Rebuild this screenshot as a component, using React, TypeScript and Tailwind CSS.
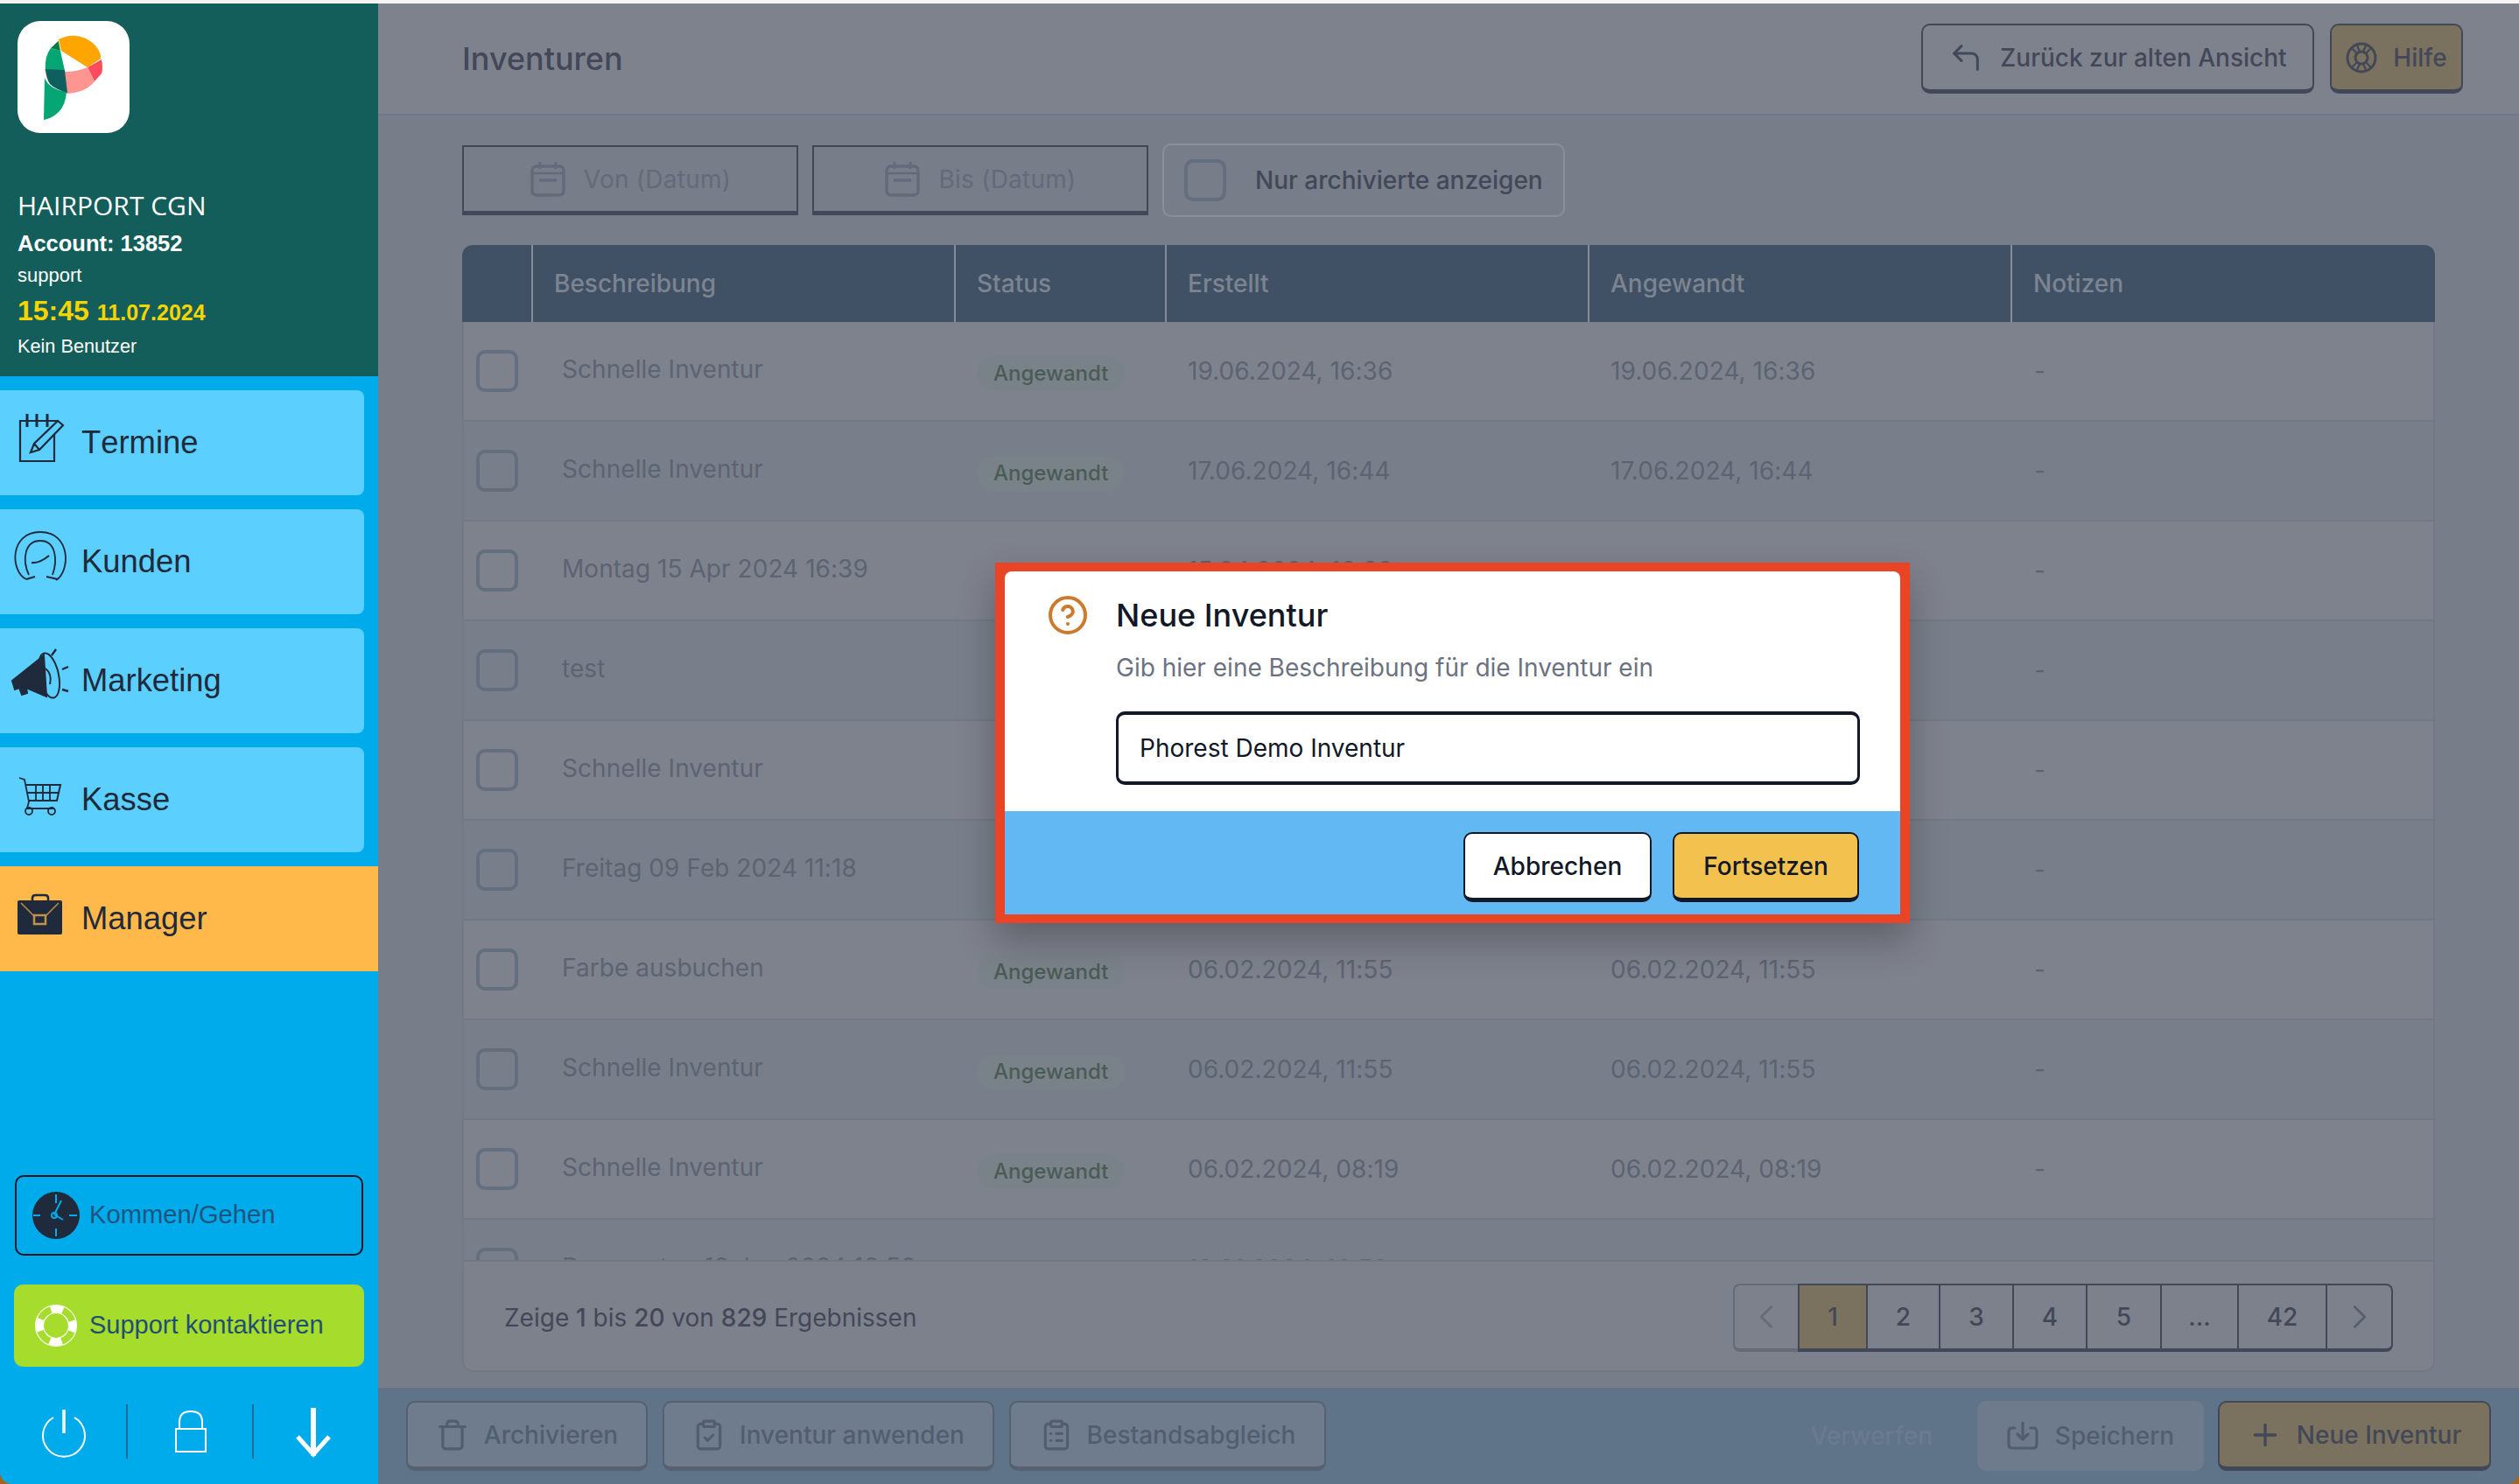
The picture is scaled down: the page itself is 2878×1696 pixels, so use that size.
import React from "react";
import { CircleHelp, CornerUpLeft, Plus, ChevronLeft, ChevronRight, Trash, ClipboardCheck, ClipboardList } from "lucide-react";

const INK = "#1f2a3c";

function Logo() {
  return (
    <div className="w-[128px] h-[128px] rounded-[26px] bg-white">
      <svg width="128" height="128" viewBox="0 0 128 128">
        <path d="M47 21 Q63 13 78 20 Q92 27 95 39 L95 43 L80 53 L50 34 Z" fill="#ffa500" />
        <path d="M80 53 L96 44 Q98 54 96 60 L88 69 Z" fill="#ff4b5c" />
        <path d="M54 58 Q68 58 80 53 L88 69 Q78 82 56 83 Z" fill="#ff9590" />
        <path d="M31.7 56 Q31 40 38 31 L49 34 L54 57 Z" fill="#06a574" />
        <path d="M38 31 L46.7 22.7 L49 34 Z" fill="#0a7d3e" />
        <path d="M31 65 Q36 78 56 81 Q55 96 47 104 Q40 111 30 113 Z" fill="#06a574" />
        <path d="M31.7 55 L54 56 L57 82 Q43 78 37 72 Q33 66 31.7 55 Z" fill="#0f5f5e" />
      </svg>
    </div>
  );
}

function TermineIcon() {
  return (
    <svg width="90" height="120" viewBox="0 0 90 120" fill="none" stroke={INK} strokeWidth="2.2">
      <path d="M62 50 V81 H23 V35 H66" />
      <path d="M31 27 V42 M42 27 V42 M54 27 V42" strokeWidth="3" />
      <path d="M35 71 L39 61 L66 35 L72 40 L45 68 Z M39 61 L45 68" />
    </svg>
  );
}
function KundenIcon() {
  return (
    <svg width="90" height="120" viewBox="0 0 90 120" fill="none" stroke={INK} strokeWidth="1.8">
      <path d="M30 80 C12 72 10 26 46 26 C82 26 80 72 64 81" />
      <path d="M33 75 C25 58 28 36 46 36 C64 36 66 58 60 75" />
      <path d="M36 61 C44 62 50 58 56 53" strokeWidth="2.2" />
      <path d="M30 80 L40 77 M53 77 L66 80" strokeWidth="2.2" />
    </svg>
  );
}
function MarketingIcon() {
  return (
    <svg width="90" height="120" viewBox="0 0 90 120" fill="none" stroke={INK} strokeWidth="2">
      <path d="M14 60 L44 36 L50 31 L53 78 L30 68 L31 74 L25 76 L22 68 L17 70 Z" fill={INK} />
      <ellipse cx="56" cy="54" rx="11" ry="26" transform="rotate(-12 56 54)" />
      <path d="M52 46 C57 50 59 56 57 64" />
      <path d="M59 31 L64 24 M71 47 L78 44 M71 70 L78 72" strokeWidth="2.4" />
    </svg>
  );
}
function KasseIcon() {
  return (
    <svg width="90" height="120" viewBox="0 0 90 120" fill="none" stroke={INK} strokeWidth="1.8">
      <path d="M22 35 L28 37 L33 62 L31 70 H62" />
      <path d="M30 43 H69 L65 61 H33" strokeWidth="2" />
      <path d="M31 52 H67 M41 43 V61 M49 43 V61 M57 43 V61" />
      <circle cx="33" cy="73" r="4" />
      <circle cx="59" cy="73" r="4" />
    </svg>
  );
}
function ManagerIcon() {
  return (
    <svg width="90" height="120" viewBox="0 0 90 120" fill="none">
      <path d="M37 39 V36 Q37 33 41 33 H51 Q55 33 55 36 V39" stroke={INK} strokeWidth="2.5" />
      <rect x="20" y="39" width="51" height="39" rx="2" fill={INK} />
      <path d="M24 42 L40 58 M67 42 L51 58" stroke="#b98a3f" strokeWidth="1.6" />
      <rect x="39" y="56" width="13" height="10" fill={INK} stroke="#c2914a" strokeWidth="2.5" />
    </svg>
  );
}
function ClockIcon() {
  return (
    <svg width="56" height="56" viewBox="0 0 56 56" fill="none" stroke="#00abeb" strokeWidth="2">
      <circle cx="28" cy="28" r="27" fill={INK} stroke="none" />
      <path d="M28 4 V14 M28 43 V52 M2 28 H10 M43 28 H52" />
      <path d="M26 27 L34 11 M26 27 L36 33" />
      <circle cx="26" cy="28" r="3" />
    </svg>
  );
}
function BuoyIcon() {
  return (
    <svg width="50" height="50" viewBox="0 0 50 50" fill="none" stroke="#ffffff">
      <circle cx="25" cy="25" r="19" strokeWidth="8" strokeDasharray="14 16" strokeDashoffset="7" />
      <circle cx="25" cy="25" r="23.5" strokeWidth="1.2" />
      <circle cx="25" cy="25" r="14.5" strokeWidth="1.2" />
    </svg>
  );
}
function WheelIcon() {
  return (
    <svg width="36" height="36" viewBox="0 0 36 36" fill="none" stroke="#434859" strokeWidth="3">
      <circle cx="18" cy="18" r="16" />
      <circle cx="18" cy="18" r="7" />
      <path d="M7 7 L13 13 M13 4 L16 11 M29 7 L23 13 M23 4 L20 11 M7 29 L13 23 M13 32 L16 25 M29 29 L23 23 M23 32 L20 25" strokeWidth="2.2" />
    </svg>
  );
}
function CalendarIcon() {
  return (
    <svg width="42" height="42" viewBox="0 0 42 42" fill="none" stroke="#636b7b" strokeWidth="3.5">
      <rect x="3" y="6" width="36" height="33" rx="5" />
      <path d="M12 1 V9 M30 1 V9 M3 14 H39" strokeWidth="2.5" />
      <path d="M11 22 H31" />
    </svg>
  );
}
function SaveIcon() {
  return (
    <svg width="36" height="34" viewBox="0 0 36 34" fill="none" stroke="#525e70" strokeWidth="3.2" strokeLinecap="round" strokeLinejoin="round">
      <path d="M9 8 H6 Q2 8 2 12 V27 Q2 31 6 31 H30 Q34 31 34 27 V12 Q34 8 30 8 H27" />
      <path d="M18 2 V21 M12 15 L18 21 L24 15" />
    </svg>
  );
}

const NAV = [
  { label: "Termine", icon: <TermineIcon /> },
  { label: "Kunden", icon: <KundenIcon /> },
  { label: "Marketing", icon: <MarketingIcon /> },
  { label: "Kasse", icon: <KasseIcon /> },
];

function Sidebar() {
  return (
    <aside className="w-[432px] shrink-0 h-full flex flex-col bg-[#00abeb] font-['Liberation_Sans',Arial,sans-serif]">
      <div className="h-[426px] shrink-0 bg-[#135e5a] pt-5 pl-5 text-white">
        <Logo />
        <div className="mt-[63px] h-[40px] leading-[40px] text-[30px] font-['Open_Sans',sans-serif]">HAIRPORT CGN</div>
        <div className="mt-[3px] h-[40px] leading-[40px] text-[25.5px] font-bold">Account: 13852</div>
        <div className="mt-[2px] h-[30px] leading-[30px] text-[22px]">support</div>
        <div className="mt-[5px] h-[40px] leading-[40px] text-[#f5d400] font-bold flex items-baseline gap-[9px]">
          <span className="text-[32px]">15:45</span>
          <span className="text-[25px]">11.07.2024</span>
        </div>
        <div className="mt-[6px] h-[30px] leading-[30px] text-[21.7px]">Kein Benutzer</div>
      </div>
      <nav className="pt-4 flex flex-col gap-4">
        {NAV.map((n) => (
          <div key={n.label} className="w-[416px] h-[120px] rounded-r-lg bg-[#5bcffd] flex items-center gap-[3px] text-[36.4px] text-[#1f2a3c] [font-kerning:none]">
            {n.icon}
            <span>{n.label}</span>
          </div>
        ))}
        <div className="w-[432px] h-[120px] bg-[#ffb84a] flex items-center gap-[3px] text-[36.4px] text-[#1f2a3c] [font-kerning:none]">
          <ManagerIcon />
          <span>Manager</span>
        </div>
      </nav>
      <div className="mt-[233px] ml-[17px] w-[398px] h-[92px] rounded-[10px] border-2 border-[#0b1220] flex items-center pl-[17px] gap-[10px] text-[29.2px] text-[#1e5480]">
        <ClockIcon />
        <span>Kommen/Gehen</span>
      </div>
      <div className="mt-[33px] ml-4 w-[400px] h-[94px] rounded-[10px] bg-[#a6dc2b] flex items-center pl-[23px] gap-[13px] text-[29px] text-[#1f4f75]">
        <BuoyIcon />
        <span>Support kontaktieren</span>
      </div>
      <div className="pt-[43px] flex h-[134px]">
        <div className="w-[144px] h-[62px] flex items-center justify-center">
          <svg className="mt-[3px] ml-[1px]" width="56" height="62" viewBox="0 0 56 62" fill="none" stroke="#ffffff" strokeWidth="2">
            <path d="M16 13 A24 24 0 1 0 40 13" />
            <path d="M28 4 V31" strokeWidth="3.5" />
          </svg>
        </div>
        <div className="w-[2px] h-[62px] bg-[#1e6d9b]" />
        <div className="w-[142px] h-[62px] flex items-center justify-center">
          <svg className="mt-[4px] ml-[1px]" width="40" height="54" viewBox="0 0 40 54" fill="none" stroke="#ffffff" strokeWidth="2">
            <rect x="3" y="22" width="34" height="26" />
            <path d="M7 22 V14 Q7 2 20 2 Q33 2 33 14 V22" />
          </svg>
        </div>
        <div className="w-[2px] h-[62px] bg-[#1e6d9b]" />
        <div className="w-[136px] h-[62px] flex items-center justify-center">
          <svg className="mt-[1px]" width="42" height="62" viewBox="0 0 42 62" fill="none" stroke="#ffffff">
            <path d="M21 3 V58" strokeWidth="6" />
            <path d="M3 36 L21 56 L39 36" strokeWidth="5" />
          </svg>
        </div>
      </div>
    </aside>
  );
}

type Row = { name: string; created: string; applied: string; done: boolean };

const ROWS: Row[] = [
  { name: "Schnelle Inventur", created: "19.06.2024, 16:36", applied: "19.06.2024, 16:36", done: true },
  { name: "Schnelle Inventur", created: "17.06.2024, 16:44", applied: "17.06.2024, 16:44", done: true },
  { name: "Montag 15 Apr 2024 16:39", created: "15.04.2024, 16:39", applied: "-", done: false },
  { name: "test", created: "15.04.2024, 10:12", applied: "-", done: false },
  { name: "Schnelle Inventur", created: "12.03.2024, 09:41", applied: "-", done: false },
  { name: "Freitag 09 Feb 2024 11:18", created: "09.02.2024, 11:18", applied: "-", done: false },
  { name: "Farbe ausbuchen", created: "06.02.2024, 11:55", applied: "06.02.2024, 11:55", done: true },
  { name: "Schnelle Inventur", created: "06.02.2024, 11:55", applied: "06.02.2024, 11:55", done: true },
  { name: "Schnelle Inventur", created: "06.02.2024, 08:19", applied: "06.02.2024, 08:19", done: true },
  { name: "Donnerstag 18 Jan 2024 16:50", created: "18.01.2024, 16:50", applied: "-", done: false },
];

const HEAD = ["", "Beschreibung", "Status", "Erstellt", "Angewandt", "Notizen"];

function Checkbox() {
  return <div className="w-[48px] h-[48px] rounded-[10px] border-[4px] border-[#656e7e]" />;
}

function Table() {
  return (
    <div className="mt-8 flex-1 min-h-0 flex flex-col rounded-t-xl rounded-b-xl overflow-hidden">
      <div className="h-[88px] shrink-0 grid grid-cols-[81px_483px_241px_483px_483px_1fr] bg-[#415165] text-[28px] font-medium text-[#7d8491]">
        {HEAD.map((h, i) => (
          <div key={i} className={"flex items-center pl-[24px] " + (i < 5 ? "border-r-2 border-[#858b97]" : "")}>
            {h}
          </div>
        ))}
      </div>
      <div className="flex-1 min-h-0 overflow-hidden border-x-2 border-[#747884]">
        {ROWS.map((r, i) => (
          <div
            key={i}
            className={
              "h-[114px] grid grid-cols-[79px_483px_241px_483px_483px_1fr] items-center border-b-2 border-[#747884] text-[28px] tracking-[0.05px] text-[#5c6372] " +
              (i % 2 === 0 ? "bg-[#7e828d]" : "bg-[#797f8a]")
            }
          >
            <div className="pl-[14px]">
              <Checkbox />
            </div>
            <div className="pl-[33px] pb-[5px]">{r.name}</div>
            <div className="pl-[24px]">
              {r.done && (
                <span className="inline-flex items-center h-[40px] px-[19px] mt-[6px] rounded-full bg-[#7a8289] text-[24px] tracking-normal font-medium text-[#4a5b56]">
                  Angewandt
                </span>
              )}
            </div>
            <div className="pl-[24px]">{r.created}</div>
            <div className="pl-[24px]">{r.applied}</div>
            <div className="pl-[25px]">-</div>
          </div>
        ))}
      </div>
      <div className="h-[128px] shrink-0 bg-[#7d818c] border-t-2 border-x-2 border-b-2 border-[#747884] rounded-b-xl flex items-center justify-between pt-[3px] pl-[46px] pr-[46px]">
        <div className="text-[28px] text-[#434859]">
          Zeige <span className="font-medium">1</span> bis <span className="font-medium">20</span> von{" "}
          <span className="font-medium">829</span> Ergebnissen
        </div>
        <Pagination />
      </div>
    </div>
  );
}

function Pagination() {
  const pages = [
    ["2", "w-[83px]"],
    ["3", "w-[84px]"],
    ["4", "w-[84px]"],
    ["5", "w-[85px]"],
    ["...", "w-[88px]"],
    ["42", "w-[101px]"],
  ];
  return (
    <div className="flex h-[78px] text-[28px] font-medium text-[#434859]">
      <div className="w-[74px] flex items-center justify-center rounded-l-lg border-2 border-b-4 border-r-0 border-[#646b79] text-[#646b79]">
        <ChevronLeft size={46} strokeWidth={1.3} />
      </div>
      <div className="w-[80px] flex items-center justify-center bg-[#7a725e] border-2 border-b-4 border-[#434859]">1</div>
      {pages.map(([p, w]) => (
        <div key={p} className={w + " flex items-center justify-center border-t-2 border-b-4 border-r-2 border-[#434859]"}>
          {p}
        </div>
      ))}
      <div className="w-[75px] flex items-center justify-center rounded-r-lg border-t-2 border-b-4 border-r-2 border-[#434859] text-[#565d6c]">
        <ChevronRight size={46} strokeWidth={1.3} />
      </div>
    </div>
  );
}

function Main() {
  const btn = "h-[80px] rounded-[10px] flex items-center justify-center border-2 border-b-[5px] text-[28px] font-medium";
  return (
    <main className="flex-1 min-w-0 h-full flex flex-col bg-[#777d89] font-['Inter',sans-serif]">
      <header className="h-[128px] shrink-0 bg-[#7e828d] border-b-2 border-[#6b788d] flex items-center justify-between pl-[96px] pr-[64px]">
        <h1 className="text-[36px] font-medium text-[#434859]">Inventuren</h1>
        <div className="flex gap-[18px] text-[#434859]">
          <div className={btn + " w-[449px] gap-[19px] border-[#434859]"}>
            <CornerUpLeft size={40} strokeWidth={1.8} />
            <span>Zurück zur alten Ansicht</span>
          </div>
          <div className={btn + " w-[152px] gap-[18px] border-[#434859] bg-[#7a725e]"}>
            <WheelIcon />
            <span>Hilfe</span>
          </div>
        </div>
      </header>
      <div className="flex-1 min-h-0 flex flex-col pt-8 px-[96px] pb-[18px]">
        <div className="h-[84px] shrink-0 flex items-center gap-4 text-[28px] tracking-[0.25px]">
          <div className="w-[384px] h-[80px] flex items-center justify-center gap-[20px] border-2 border-b-[5px] border-[#434859] text-[#636b7b]">
            <CalendarIcon />
            <span>Von (Datum)</span>
          </div>
          <div className="w-[384px] h-[80px] flex items-center justify-center gap-[20px] border-2 border-b-[5px] border-[#434859] text-[#636b7b]">
            <CalendarIcon />
            <span>Bis (Datum)</span>
          </div>
          <div className="w-[460px] h-[84px] rounded-[10px] border-2 border-[#8a8f9a] flex items-center pl-[23px] gap-[33px] font-medium tracking-normal text-[#434859]">
            <Checkbox />
            <span>Nur archivierte anzeigen</span>
          </div>
        </div>
        <Table />
      </div>
      <div className="h-[110px] shrink-0 bg-[#5f7389] flex items-center pl-[32px] pr-[32px] text-[#525e70]">
        <div className="flex gap-[17px]">
          <div className={btn + " w-[276px] gap-[17px] border-[#56606f] bg-[#6f7c8d]"}>
            <Trash size={38} strokeWidth={2} />
            <span>Archivieren</span>
          </div>
          <div className={btn + " w-[379px] gap-[16px] border-[#56606f] bg-[#6f7c8d]"}>
            <ClipboardCheck size={38} strokeWidth={2} />
            <span>Inventur anwenden</span>
          </div>
          <div className={btn + " w-[362px] gap-[16px] border-[#56606f] bg-[#6f7c8d]"}>
            <ClipboardList size={38} strokeWidth={2} />
            <span>Bestandsabgleich</span>
          </div>
        </div>
        <div className="ml-auto mr-[51px] text-[28px] font-medium text-[#6b7a8e]">Verwerfen</div>
        <div className="w-[259px] h-[80px] rounded-[10px] bg-[#6d7b8c] flex items-center justify-center gap-[19px] text-[28px] font-medium">
          <SaveIcon />
          <span>Speichern</span>
        </div>
        <div className={btn + " ml-4 w-[312px] gap-[16px] border-[#434859] bg-[#7a725e] text-[#434859]"}>
          <Plus size={40} strokeWidth={2} />
          <span>Neue Inventur</span>
        </div>
      </div>
    </main>
  );
}

function Modal() {
  return (
    <div className="absolute left-[1137px] top-[643px] w-[1045px] h-[412px] border-x-[11px] border-y-[10px] border-[#e94426] bg-[#e94426] flex flex-col shadow-[0_20px_40px_rgba(0,0,0,0.25)] font-['Inter',sans-serif]">
      <div className="h-[274px] shrink-0 rounded-t-lg bg-white pt-[28px] pl-[48px] flex gap-[31px]">
        <CircleHelp size={48} strokeWidth={2} className="text-[#cc7a2b] -mt-[2px]" />
        <div>
          <h2 className="text-[36px] leading-[44px] font-medium text-[#111827]">Neue Inventur</h2>
          <p className="mt-[18px] text-[28px] leading-[40px] text-[#6b7280]">Gib hier eine Beschreibung für die Inventur ein</p>
          <div className="mt-[30px] w-[850px] h-[84px] rounded-[10px] border-[3px] border-b-[4px] border-t-[4px] border-[#111827] flex items-center pl-[24px] text-[28px] text-[#111827]">
            Phorest Demo Inventur
          </div>
        </div>
      </div>
      <div className="flex-1 bg-[#62b8f2] pt-[24px] pr-[47px] flex justify-end gap-[24px] text-[28px] font-medium text-[#111827]">
        <div className="w-[215px] h-[80px] rounded-[10px] bg-white border-2 border-b-[5px] border-[#111827] flex items-center justify-center">Abbrechen</div>
        <div className="w-[213px] h-[80px] rounded-[10px] bg-[#f2c14e] border-2 border-b-[5px] border-[#111827] flex items-center justify-center">Fortsetzen</div>
      </div>
    </div>
  );
}

export default function App() {
  return (
    <div className="w-[2878px] h-[1696px] bg-[#f5f3f4] pt-[4px] overflow-hidden">
      <div className="relative h-[1692px] bg-[#a5641f]">
        <div className="h-full flex rounded-b-[14px] overflow-hidden">
          <Sidebar />
          <Main />
        </div>
        <div className="absolute left-0 top-[-4px]">
          <Modal />
        </div>
      </div>
    </div>
  );
}
